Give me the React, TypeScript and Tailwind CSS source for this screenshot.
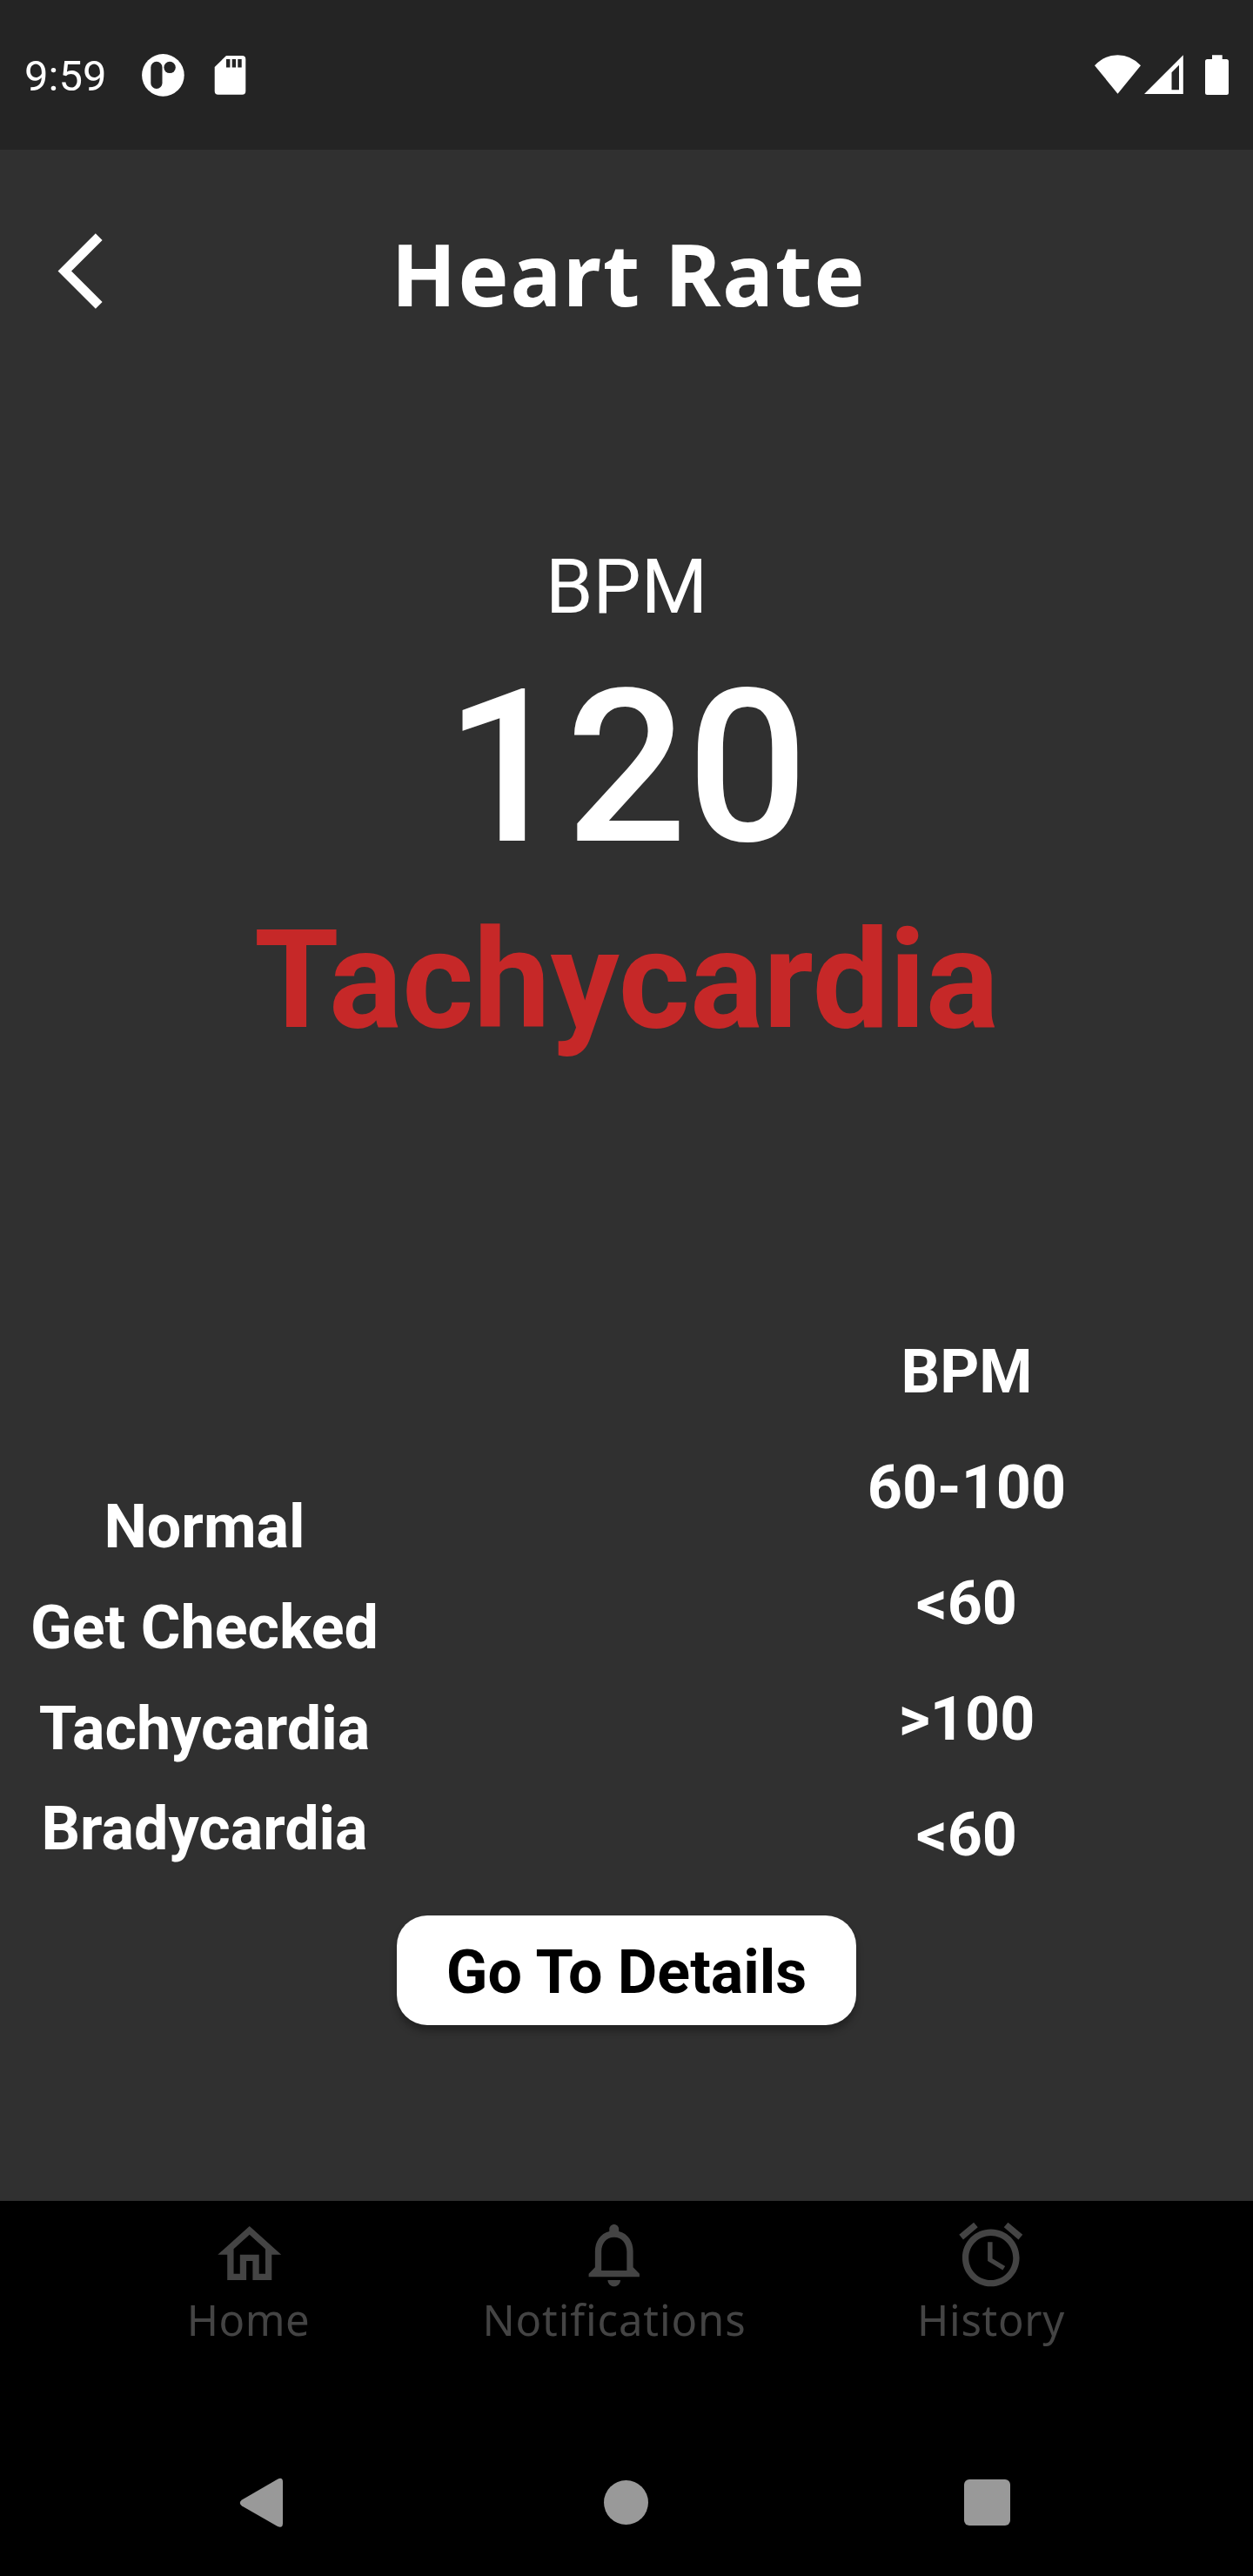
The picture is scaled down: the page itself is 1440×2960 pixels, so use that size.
import React from "react";

const ranges = ["60-100", "<60", ">100", "<60"];
const labels = ["Normal", "Get Checked", "Tachycardia", "Bradycardia"];

const tabs = [
  {
    name: "Home",
    box: "ml-[187px] w-[200px]",
    text: "tracking-[0.5px] -ml-[3px]",
    path: "M12 5.69l5 4.5V18h-2v-6H9v6H7v-7.81l5-4.5M12 3L2 12h3v8h6v-6h2v6h6v-8h3L12 3z",
  },
  {
    name: "Notifications",
    box: "ml-[119px] w-[400px]",
    text: "tracking-[0.9px]",
    path: "M12 22c1.1 0 2-.9 2-2h-4c0 1.1.9 2 2 2zm6-6v-5c0-3.07-1.63-5.64-4.5-6.32V4c0-.83-.67-1.5-1.5-1.5s-1.5.67-1.5 1.5v.68C7.64 5.36 6 7.92 6 11v5l-2 2v1h16v-1l-2-2zm-2 1H8v-6c0-2.48 1.51-4.5 4-4.5s4 2.02 4 4.5v6z",
  },
  {
    name: "History",
    box: "ml-[133px] w-[200px]",
    text: "tracking-[0.7px]",
    path: "M22 5.72l-4.6-3.86-1.29 1.53 4.6 3.86L22 5.72zM7.88 3.39L6.6 1.86 2 5.71l1.29 1.53 4.59-3.85zM12.5 8H11v6l4.75 2.85.75-1.23-4-2.37V8zM12 4c-4.97 0-9 4.03-9 9s4.02 9 9 9c4.97 0 9-4.03 9-9s-4.03-9-9-9zm0 16c-3.87 0-7-3.13-7-7s3.13-7 7-7 7 3.13 7 7-3.13 7-7 7z",
  },
];

function StatusBar() {
  return (
    <header className="flex h-[172px] items-start bg-[#242424]">
      <span className="ml-[28px] mt-[58px] w-[94px] whitespace-nowrap text-[49px] leading-[60px]">9:59</span>
      <svg className="ml-[41px] mt-[62px] h-[49px] w-[49px]" viewBox="163 62 49 49">
        <circle cx="187.4" cy="86.4" r="24.3" fill="#fff" />
        <rect x="173.3" y="70.8" width="13.2" height="31.2" rx="6.6" fill="#242424" />
        <circle cx="195.1" cy="77.4" r="6.7" fill="#242424" />
      </svg>
      <svg className="ml-[34px] mt-[64px] h-[45px] w-[37px]" viewBox="246 64 37 45">
        <path d="M260 64h18.300q4 0 4 4v36.700q0 4-4 4h-27.600q-4 0-4-4V77z" fill="#fff" />
        <path d="M260 68h4.400v9.600H260zM266.700 68h4.400v9.600h-4.400zM273.300 68h4.400v9.600h-4.400z" fill="#242424" />
      </svg>
      <svg className="ml-auto mr-[27px] mt-[62px] h-[48px] w-[156px]" viewBox="1257 62 156 48" fill="#fff">
        <path d="M1258 75.200Q1269.500 63.200 1284.500 63.200T1311 75.200L1284.500 107.700z" />
        <path fillRule="evenodd" d="M1315 108L1359.800 63.300V108zM1346.500 83.300V103.300H1355V74.800z" />
        <path d="M1393 63.200h11.700V68h4.800q2.500 0 2.500 2.500v36q0 2.500-2.500 2.500h-22q-2.500 0-2.500-2.500v-36q0-2.500 2.500-2.500h5.500z" />
      </svg>
    </header>
  );
}

export default function App() {
  return (
    <div className="flex h-[2960px] w-[1440px] flex-col overflow-hidden bg-[#303030] font-['Roboto',sans-serif] text-white">
      <StatusBar />

      <div className="grid h-[284px] grid-cols-[200px_1fr_200px] items-center">
        <button aria-label="Back" className="ml-[41px] mt-[-5px] w-[105px]">
          <svg className="h-[105px] w-[105px]" viewBox="0 0 24 24" fill="#fff">
            <path d="M17.510 3.870L15.730 2.100 5.840 12l9.900 9.900 1.770-1.770L9.380 12l8.130-8.130z" />
          </svg>
        </button>
        <h1 className="pl-[5px] text-center font-['Noto_Sans',sans-serif] text-[98px] font-bold leading-[120px] tracking-[1.8px]">
          Heart Rate
        </h1>
      </div>

      <section className="flex h-[1074px] flex-col items-center pt-[168px] text-center">
        <p className="text-[87.5px] leading-[100px]">BPM</p>
        <p className="mt-[18px] text-[245px] font-medium leading-[281px]">120</p>
        <p className="mt-[13px] text-[157.5px] font-bold leading-[180px] text-[#c62828]">Tachycardia</p>
      </section>

      <section className="flex h-[671px] items-end justify-between text-[70px] font-bold">
        <div className="mb-[41px] w-[470px] text-center">
          {labels.map((label) => (
            <p key={label} className="leading-[115.67px]">{label}</p>
          ))}
        </div>
        <div className="mb-[26px] mr-[129px] w-[400px] text-center">
          <p className="leading-[133.1px]">BPM</p>
          {ranges.map((range, i) => (
            <p key={i} className="leading-[133.1px]">{range}</p>
          ))}
        </div>
      </section>

      <div className="flex h-[328px] justify-center">
        <button className="h-[126px] w-[528px] rounded-[35px] bg-white pt-[3px] text-[70px] font-bold leading-[120px] text-black shadow-[0_7px_8px_rgba(0,0,0,0.3)]">
          Go To Details
        </button>
      </div>

      <nav className="flex h-[251px] bg-black pt-[18px] font-['Noto_Sans',sans-serif] font-normal text-[#444444]">
        {tabs.map((tab) => (
          <div key={tab.name} className={`flex flex-col items-center ${tab.box}`}>
            <svg className="h-[87.5px] w-[87.5px]" viewBox="0 0 24 24" fill="currentColor">
              <path d={tab.path} />
            </svg>
            <span className={`whitespace-nowrap text-[49px] leading-[60px] ${tab.text}`}>{tab.name}</span>
          </div>
        ))}
      </nav>

      <footer className="flex h-[180px] items-start bg-black pt-[66px]">
        <svg className="ml-[275px] h-[60px] w-[51px]" viewBox="275 2846 51 60">
          <path d="M278 2872.500L319 2848.700Q325 2846 325 2852V2899.500Q325 2905.500 319 2903L278 2879.500Q273.500 2876 278 2872.500z" fill="#999" />
        </svg>
        <div className="ml-[368px] mt-[4px] h-[51px] w-[51px] rounded-full bg-[#999999]" />
        <div className="ml-[363px] mt-[3px] h-[53px] w-[53px] rounded-[6px] bg-[#999999]" />
      </footer>
    </div>
  );
}
